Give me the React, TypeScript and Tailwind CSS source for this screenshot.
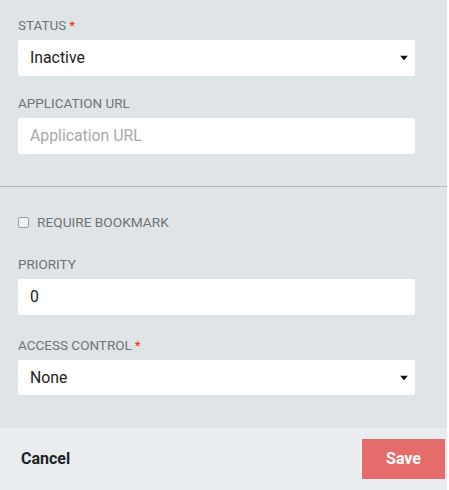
import React from "react";

function Caret() {
  return (
    <svg width="8" height="5" viewBox="0 0 8 5" className="absolute right-[7px] top-1/2 -translate-y-1/2">
      <path d="M0 0 H8 L4 5 Z" fill="#111" />
    </svg>
  );
}

function Label({ text, required }: { text: string; required?: boolean }) {
  return (
    <div className="h-4 text-[13.5px] leading-4 text-[#707477] uppercase">
      {text}
      {required && <span className="text-[#f22] ml-[3px]">*</span>}
    </div>
  );
}

function Field({ value, placeholder, select, h = 36 }: { value?: string; placeholder?: string; select?: boolean; h?: number }) {
  return (
    <div
      className={`relative mt-[7px] bg-white rounded-[2px] flex items-center pl-[12px] text-[15.8px] ${h === 36 ? "h-9" : "h-[35px]"}`}
    >
      {value ? (
        <span className="text-[#222]">{value}</span>
      ) : (
        <span className="text-[#a9a9a9]">{placeholder}</span>
      )}
      {select && <Caret />}
    </div>
  );
}

export default function App() {
  return (
    <div className="w-[449px] h-[490px] bg-white" style={{ fontFamily: "Roboto, 'Noto Sans', sans-serif" }}>
      <div className="w-[447px] h-[490px] flex flex-col">
        <div className="bg-[#dfe4e7] h-[428px] flex flex-col">
          <div className="pl-[18px] pr-[32px] pt-[17px]">
            <Label text="Status" required />
            <Field value="Inactive" select />
            <div className="mt-[19px]">
              <Label text="Application URL" />
              <Field placeholder="Application URL" />
            </div>
          </div>
          <div className="mt-[32px] h-px bg-[#b3babe]" />
          <div className="pl-[18px] pr-[32px]">
            <div className="mt-[27px] h-4 flex items-center">
              <div className="w-[11px] h-[11px] rounded-[2px] border border-[#9aa0a4] bg-[#eef0f1]" />
              <span className="ml-[8px] text-[13.7px] text-[#707477] leading-4">REQUIRE BOOKMARK</span>
            </div>
            <div className="mt-[26px]">
              <Label text="Priority" />
              <Field value="0" />
            </div>
            <div className="mt-[22px]">
              <Label text="Access Control" required />
              <Field value="None" select h={35} />
            </div>
          </div>
        </div>
        <div className="flex-1 bg-[#e9edf0] flex items-center justify-between pl-[21px] pr-[2px]">
          <span className="text-[16px] font-bold text-[#222]">Cancel</span>
          <button className="w-[83px] h-[40px] bg-[#e66c6c] text-white text-[16px] font-bold">Save</button>
        </div>
      </div>
    </div>
  );
}
